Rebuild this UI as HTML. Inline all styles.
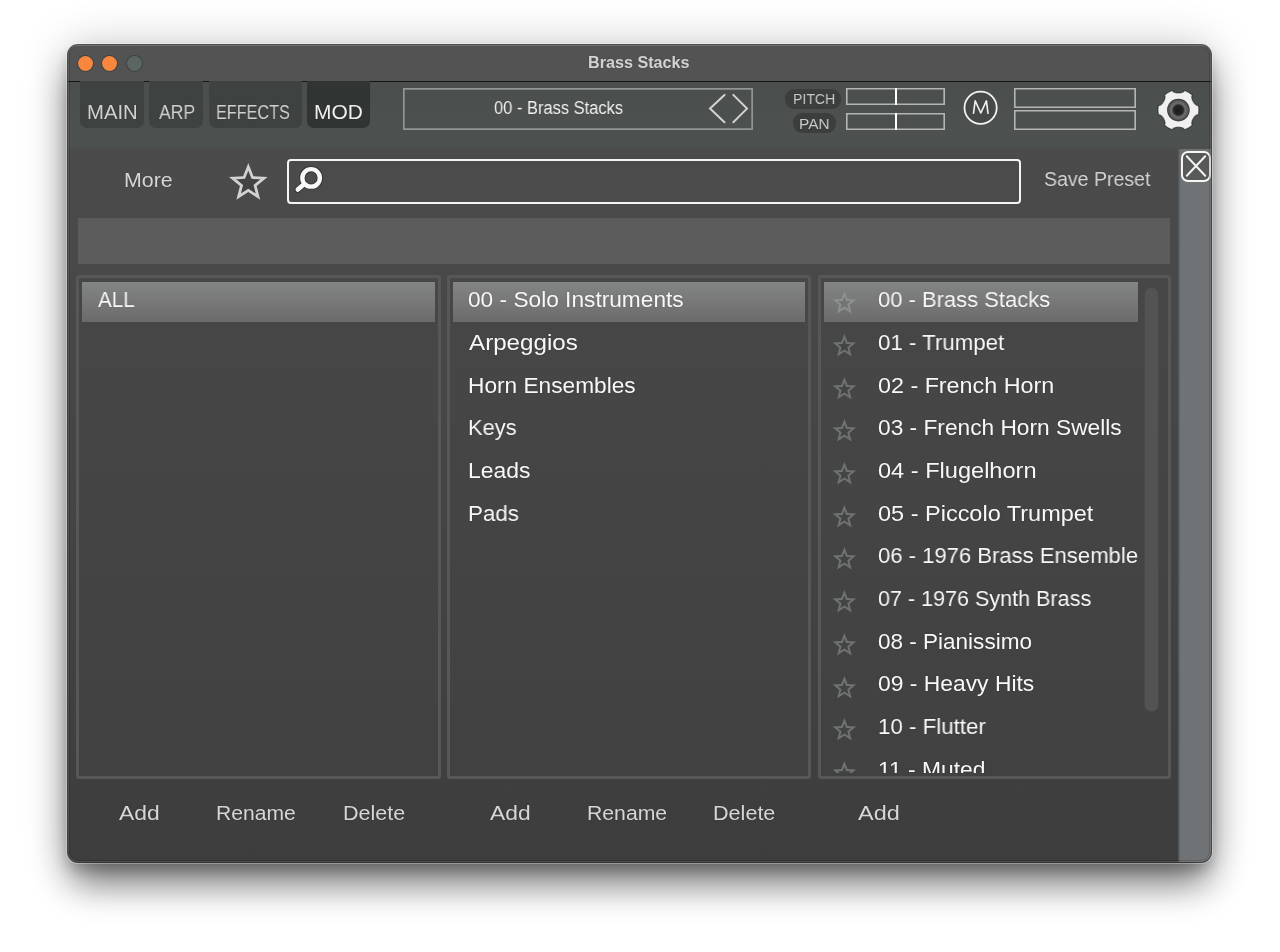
<!DOCTYPE html>
<html><head><meta charset="utf-8">
<style>
*{margin:0;padding:0;box-sizing:border-box}
html,body{width:1280px;height:952px;overflow:hidden;background:#fff;font-family:"Liberation Sans",sans-serif}
.win{position:absolute;left:68px;top:45px;width:1143px;height:817px;border-radius:10px;overflow:hidden;background:#444;
 box-shadow:0 0 0 1px rgba(0,0,0,.65),0 0 0 2px rgba(255,255,255,.3),0 26px 36px -4px rgba(0,0,0,.48),0 8px 14px rgba(0,0,0,.2),0 2px 46px rgba(0,0,0,.24)}
.title{position:absolute;left:0;top:0;width:1144px;height:36.5px;background:#535353;border-bottom:1.5px solid #151515;box-shadow:inset 0 1.5px 0 rgba(255,255,255,.16)}
.dot{position:absolute;top:11px;width:15px;height:15px;border-radius:50%;box-shadow:0 0 0 1px rgba(40,55,65,.55)}
.hdr{position:absolute;left:0;top:36.5px;width:1144px;height:68.5px;background:linear-gradient(#4a4e4c,#4d5250 85%,#4b4e4d)}
.body{position:absolute;left:0;top:105px;width:1144px;height:712px;background:linear-gradient(#4b4b4b,#3d3d3d)}
.strip{position:absolute;left:1110px;top:103.5px;width:33px;height:714px;background:#6f7376;box-shadow:inset 1.5px 0 1px rgba(0,0,0,.25)}
.a{position:absolute}
.tx{position:absolute;white-space:nowrap;line-height:1;transform-origin:0 0;will-change:transform;text-shadow:0 0 1.5px rgba(0,0,0,.22)}
.tab{position:absolute;top:81px;height:47px;background:#3e4240;border-radius:0 0 7px 7px}
.panel{position:absolute;top:275px;height:504px;border:3px solid #575757;border-radius:3px;background:linear-gradient(#474747,#414141)}
.sel{position:absolute;height:40px;background:linear-gradient(#838584,#6b6b6b)}
</style></head><body>
<div class="win">
  <div class="title">
    <div class="dot" style="left:10px;background:#f7863e"></div>
    <div class="dot" style="left:34px;background:#f7863e"></div>
    <div class="dot" style="left:59px;background:#5c6660"></div>
  </div>
  <div class="hdr"></div>
  <div class="body"></div>
  <div class="strip"></div>
</div>

<!-- tabs -->
<div class="tab" style="left:80px;width:64px"></div>
<div class="tab" style="left:149px;width:54px"></div>
<div class="tab" style="left:209px;width:93px"></div>
<div class="tab" style="left:307px;width:63px;background:#303433"></div>

<!-- preset display -->
<div class="a" style="left:403px;top:88px;width:350px;height:41.5px;box-shadow:inset 0 0 0 1.7px #919594"></div>
<svg class="a" style="left:700px;top:88px" width="56" height="41" viewBox="700 88 56 41">
 <path d="M724.5 94.9 L710 108.6 L724.5 122.3 M733.3 94.9 L747 108.6 L733.3 122.3" fill="none" stroke="#d2d3d2" stroke-width="2" stroke-linecap="round" stroke-linejoin="miter"/>
</svg>

<!-- pitch / pan -->
<div class="a" style="left:785px;top:89px;width:56px;height:19.5px;border-radius:9px;background:#3b3e3d"></div>
<div class="a" style="left:793px;top:113px;width:43px;height:19.5px;border-radius:9px;background:#3b3e3d"></div>
<div class="a" style="left:846px;top:88px;width:99px;height:17px;box-shadow:inset 0 0 0 1.6px #b3b6b5"></div>
<div class="a" style="left:895px;top:88px;width:2px;height:17px;background:#fff"></div>
<div class="a" style="left:846px;top:112.5px;width:99px;height:17px;box-shadow:inset 0 0 0 1.6px #b3b6b5"></div>
<div class="a" style="left:895px;top:112.5px;width:2px;height:17px;background:#fff"></div>

<!-- M -->
<svg class="a" style="left:958px;top:86px" width="46" height="44" viewBox="958 86 46 44">
 <circle cx="980.6" cy="107.8" r="16.1" fill="#464847" stroke="#f2f2f2" stroke-width="1.8"/>
 <path d="M973.4 113.8 L975.2 100.9 L980.8 113 L986.4 100.9 L988.1 113.8" fill="none" stroke="#f0f0f0" stroke-width="1.6" stroke-linejoin="round"/>
</svg>

<!-- right boxes -->
<div class="a" style="left:1014px;top:88px;width:122px;height:19.5px;box-shadow:inset 0 0 0 1.6px #b3b6b5"></div>
<div class="a" style="left:1014px;top:110px;width:122px;height:19.5px;box-shadow:inset 0 0 0 1.6px #b3b6b5"></div>

<!-- gear -->
<svg class="a" style="left:1152px;top:84px" width="52" height="52" viewBox="1152 84 52 52">
 <defs>
  <radialGradient id="gh" cx="0.5" cy="0.5" r="0.5">
   <stop offset="0" stop-color="#1c1c1c"/><stop offset="0.42" stop-color="#262626"/><stop offset="0.62" stop-color="#707070"/><stop offset="0.85" stop-color="#555"/><stop offset="1" stop-color="#333"/>
  </radialGradient>
 </defs>
 <polygon points="1198.80,110.10 1198.80,110.46 1198.79,110.81 1198.77,111.17 1198.75,111.52 1198.72,111.88 1198.69,112.23 1198.65,112.59 1198.60,112.94 1198.55,113.29 1198.49,113.64 1198.43,113.99 1198.35,114.34 1198.28,114.69 1197.11,114.77 1196.60,114.98 1196.21,115.21 1195.88,115.44 1195.58,115.68 1195.31,115.92 1195.06,116.16 1194.83,116.41 1194.61,116.65 1194.41,116.90 1194.22,117.14 1194.03,117.39 1193.85,117.64 1193.68,117.89 1193.52,118.14 1193.36,118.39 1193.21,118.65 1193.06,118.91 1192.92,119.17 1192.78,119.44 1192.65,119.71 1192.53,119.99 1192.41,120.28 1192.29,120.57 1192.18,120.87 1192.08,121.18 1191.98,121.50 1191.90,121.83 1191.82,122.19 1191.76,122.56 1191.73,122.97 1191.73,123.43 1191.80,123.97 1192.31,125.02 1192.05,125.26 1191.78,125.50 1191.51,125.73 1191.24,125.95 1190.96,126.18 1190.68,126.39 1190.39,126.60 1190.10,126.81 1189.81,127.01 1189.51,127.21 1189.21,127.40 1188.91,127.59 1188.60,127.77 1188.29,127.94 1187.98,128.11 1187.66,128.28 1187.34,128.44 1187.02,128.59 1186.70,128.74 1186.37,128.88 1186.04,129.01 1185.71,129.15 1185.38,129.27 1185.04,129.39 1184.70,129.50 1184.36,129.61 1183.72,128.64 1183.28,128.30 1182.88,128.08 1182.51,127.91 1182.16,127.77 1181.81,127.66 1181.48,127.56 1181.15,127.48 1180.83,127.42 1180.52,127.36 1180.21,127.32 1179.90,127.28 1179.60,127.25 1179.30,127.23 1179.00,127.21 1178.70,127.20 1178.40,127.20 1178.10,127.20 1177.80,127.21 1177.50,127.23 1177.20,127.25 1176.90,127.28 1176.59,127.32 1176.28,127.36 1175.97,127.42 1175.65,127.48 1175.32,127.56 1174.99,127.66 1174.64,127.77 1174.29,127.91 1173.92,128.08 1173.52,128.30 1173.08,128.64 1172.44,129.61 1172.10,129.50 1171.76,129.39 1171.42,129.27 1171.09,129.15 1170.76,129.01 1170.43,128.88 1170.10,128.74 1169.78,128.59 1169.46,128.44 1169.14,128.28 1168.82,128.11 1168.51,127.94 1168.20,127.77 1167.89,127.59 1167.59,127.40 1167.29,127.21 1166.99,127.01 1166.70,126.81 1166.41,126.60 1166.12,126.39 1165.84,126.18 1165.56,125.95 1165.29,125.73 1165.02,125.50 1164.75,125.26 1164.49,125.02 1165.00,123.97 1165.07,123.43 1165.07,122.97 1165.04,122.56 1164.98,122.19 1164.90,121.83 1164.82,121.50 1164.72,121.18 1164.62,120.87 1164.51,120.57 1164.39,120.28 1164.27,119.99 1164.15,119.71 1164.02,119.44 1163.88,119.17 1163.74,118.91 1163.59,118.65 1163.44,118.39 1163.28,118.14 1163.12,117.89 1162.95,117.64 1162.77,117.39 1162.58,117.14 1162.39,116.90 1162.19,116.65 1161.97,116.41 1161.74,116.16 1161.49,115.92 1161.22,115.68 1160.92,115.44 1160.59,115.21 1160.20,114.98 1159.69,114.77 1158.52,114.69 1158.45,114.34 1158.37,113.99 1158.31,113.64 1158.25,113.29 1158.20,112.94 1158.15,112.59 1158.11,112.23 1158.08,111.88 1158.05,111.52 1158.03,111.17 1158.01,110.81 1158.00,110.46 1158.00,110.10 1158.00,109.74 1158.01,109.39 1158.03,109.03 1158.05,108.68 1158.08,108.32 1158.11,107.97 1158.15,107.61 1158.20,107.26 1158.25,106.91 1158.31,106.56 1158.37,106.21 1158.45,105.86 1158.52,105.51 1159.69,105.43 1160.20,105.22 1160.59,104.99 1160.92,104.76 1161.22,104.52 1161.49,104.28 1161.74,104.04 1161.97,103.79 1162.19,103.55 1162.39,103.30 1162.58,103.06 1162.77,102.81 1162.95,102.56 1163.12,102.31 1163.28,102.06 1163.44,101.81 1163.59,101.55 1163.74,101.29 1163.88,101.03 1164.02,100.76 1164.15,100.49 1164.27,100.21 1164.39,99.92 1164.51,99.63 1164.62,99.33 1164.72,99.02 1164.82,98.70 1164.90,98.37 1164.98,98.01 1165.04,97.64 1165.07,97.23 1165.07,96.77 1165.00,96.23 1164.49,95.18 1164.75,94.94 1165.02,94.70 1165.29,94.47 1165.56,94.25 1165.84,94.02 1166.12,93.81 1166.41,93.60 1166.70,93.39 1166.99,93.19 1167.29,92.99 1167.59,92.80 1167.89,92.61 1168.20,92.43 1168.51,92.26 1168.82,92.09 1169.14,91.92 1169.46,91.76 1169.78,91.61 1170.10,91.46 1170.43,91.32 1170.76,91.19 1171.09,91.05 1171.42,90.93 1171.76,90.81 1172.10,90.70 1172.44,90.59 1173.08,91.56 1173.52,91.90 1173.92,92.12 1174.29,92.29 1174.64,92.43 1174.99,92.54 1175.32,92.64 1175.65,92.72 1175.97,92.78 1176.28,92.84 1176.59,92.88 1176.90,92.92 1177.20,92.95 1177.50,92.97 1177.80,92.99 1178.10,93.00 1178.40,93.00 1178.70,93.00 1179.00,92.99 1179.30,92.97 1179.60,92.95 1179.90,92.92 1180.21,92.88 1180.52,92.84 1180.83,92.78 1181.15,92.72 1181.48,92.64 1181.81,92.54 1182.16,92.43 1182.51,92.29 1182.88,92.12 1183.28,91.90 1183.72,91.56 1184.36,90.59 1184.70,90.70 1185.04,90.81 1185.38,90.93 1185.71,91.05 1186.04,91.19 1186.37,91.32 1186.70,91.46 1187.02,91.61 1187.34,91.76 1187.66,91.92 1187.98,92.09 1188.29,92.26 1188.60,92.43 1188.91,92.61 1189.21,92.80 1189.51,92.99 1189.81,93.19 1190.10,93.39 1190.39,93.60 1190.68,93.81 1190.96,94.02 1191.24,94.25 1191.51,94.47 1191.78,94.70 1192.05,94.94 1192.31,95.18 1191.80,96.23 1191.73,96.77 1191.73,97.23 1191.76,97.64 1191.82,98.01 1191.90,98.37 1191.98,98.70 1192.08,99.02 1192.18,99.33 1192.29,99.63 1192.41,99.92 1192.53,100.21 1192.65,100.49 1192.78,100.76 1192.92,101.03 1193.06,101.29 1193.21,101.55 1193.36,101.81 1193.52,102.06 1193.68,102.31 1193.85,102.56 1194.03,102.81 1194.22,103.06 1194.41,103.30 1194.61,103.55 1194.83,103.79 1195.06,104.04 1195.31,104.28 1195.58,104.52 1195.88,104.76 1196.21,104.99 1196.60,105.22 1197.11,105.43 1198.28,105.51 1198.35,105.86 1198.43,106.21 1198.49,106.56 1198.55,106.91 1198.60,107.26 1198.65,107.61 1198.69,107.97 1198.72,108.32 1198.75,108.68 1198.77,109.03 1198.79,109.39 1198.80,109.74" fill="#f0f0f0" stroke="rgba(0,0,0,.45)" stroke-width="1.2"/>
 <circle cx="1178.4" cy="110.1" r="11.3" fill="url(#gh)"/>
</svg>

<!-- search row -->
<div class="a" style="left:287px;top:159px;width:734px;height:44.5px;border:2.5px solid #f4f4f4;border-radius:4px;background:#4b4b4b"></div>
<svg class="a" style="left:290px;top:162px" width="40" height="38" viewBox="290 162 40 38">
 <circle cx="311.1" cy="177.9" r="8.75" fill="none" stroke="rgba(0,0,0,.3)" stroke-width="6.2"/>
 <path d="M304 184.3 L297.8 189.6" stroke="rgba(0,0,0,.3)" stroke-width="6.4" stroke-linecap="round"/>
 <circle cx="311.1" cy="177.9" r="8.75" fill="none" stroke="#f8f8f8" stroke-width="4.4"/>
 <path d="M304 184.3 L297.8 189.6" stroke="#f8f8f8" stroke-width="4.6" stroke-linecap="round"/>
</svg>
<svg class="a" style="left:225.95px;top:160.80px" width="44.60" height="44.60" viewBox="225.95 160.80 44.60 44.60"><defs><clipPath id="sc99"><polygon points="248.25,162.80 253.42,175.98 267.56,176.83 256.62,185.82 260.18,199.52 248.25,191.90 236.32,199.52 239.88,185.82 228.94,176.83 243.08,175.98"/></clipPath></defs><polygon points="248.25,162.80 253.42,175.98 267.56,176.83 256.62,185.82 260.18,199.52 248.25,191.90 236.32,199.52 239.88,185.82 228.94,176.83 243.08,175.98" fill="#434343" stroke="#d2d2d2" stroke-width="5.6" stroke-miterlimit="20" clip-path="url(#sc99)"/></svg>

<!-- close -->
<div class="a" style="left:1180.5px;top:151px;width:30.5px;height:30.5px;border:2.5px solid #f6f6f6;border-radius:7px;background:#575858"></div>
<svg class="a" style="left:1180px;top:150px" width="32" height="32" viewBox="1180 150 32 32">
 <path d="M1186.8 156.3 L1205.2 175.8 M1205.2 156.3 L1186.8 175.8" stroke="#f4f4f4" stroke-width="2" stroke-linecap="round"/>
</svg>

<!-- gray bar -->
<div class="a" style="left:78px;top:217.5px;width:1092px;height:46px;background:#5c5c5c"></div>

<!-- panels -->
<div class="panel" style="left:76px;width:365px"></div>
<div class="panel" style="left:447px;width:364px"></div>
<div class="panel" style="left:818px;width:353px"></div>

<div class="sel" style="left:82px;top:282px;width:352.5px"></div>
<div class="sel" style="left:452.5px;top:282px;width:352.5px"></div>
<div class="sel" style="left:823.5px;top:282px;width:314px"></div>

<!-- scrollbar -->
<div class="a" style="left:1144px;top:286.5px;width:14.5px;height:425px;border-radius:7px;background:#535353;box-shadow:inset 0 0 0 1px rgba(0,0,0,.12)"></div>

<svg class="a" style="left:829.90px;top:289.20px" width="28.80" height="28.80" viewBox="829.90 289.20 28.80 28.80"><defs><clipPath id="sc0"><polygon points="844.30,291.20 847.47,299.23 856.09,299.77 849.44,305.27 851.59,313.63 844.30,309.00 837.01,313.63 839.16,305.27 832.51,299.77 841.13,299.23"/></clipPath></defs><polygon points="844.30,291.20 847.47,299.23 856.09,299.77 849.44,305.27 851.59,313.63 844.30,309.00 837.01,313.63 839.16,305.27 832.51,299.77 841.13,299.23" fill="#727473" stroke="#8e908f" stroke-width="4.0" stroke-miterlimit="20" clip-path="url(#sc0)"/></svg>
<svg class="a" style="left:829.90px;top:331.90px" width="28.80" height="28.80" viewBox="829.90 331.90 28.80 28.80"><defs><clipPath id="sc1"><polygon points="844.30,333.90 847.47,341.93 856.09,342.47 849.44,347.97 851.59,356.33 844.30,351.70 837.01,356.33 839.16,347.97 832.51,342.47 841.13,341.93"/></clipPath></defs><polygon points="844.30,333.90 847.47,341.93 856.09,342.47 849.44,347.97 851.59,356.33 844.30,351.70 837.01,356.33 839.16,347.97 832.51,342.47 841.13,341.93" fill="#434544" stroke="#6e7270" stroke-width="4.0" stroke-miterlimit="20" clip-path="url(#sc1)"/></svg>
<svg class="a" style="left:829.90px;top:374.60px" width="28.80" height="28.80" viewBox="829.90 374.60 28.80 28.80"><defs><clipPath id="sc2"><polygon points="844.30,376.60 847.47,384.63 856.09,385.17 849.44,390.67 851.59,399.03 844.30,394.40 837.01,399.03 839.16,390.67 832.51,385.17 841.13,384.63"/></clipPath></defs><polygon points="844.30,376.60 847.47,384.63 856.09,385.17 849.44,390.67 851.59,399.03 844.30,394.40 837.01,399.03 839.16,390.67 832.51,385.17 841.13,384.63" fill="#434544" stroke="#6e7270" stroke-width="4.0" stroke-miterlimit="20" clip-path="url(#sc2)"/></svg>
<svg class="a" style="left:829.90px;top:417.30px" width="28.80" height="28.80" viewBox="829.90 417.30 28.80 28.80"><defs><clipPath id="sc3"><polygon points="844.30,419.30 847.47,427.33 856.09,427.87 849.44,433.37 851.59,441.73 844.30,437.10 837.01,441.73 839.16,433.37 832.51,427.87 841.13,427.33"/></clipPath></defs><polygon points="844.30,419.30 847.47,427.33 856.09,427.87 849.44,433.37 851.59,441.73 844.30,437.10 837.01,441.73 839.16,433.37 832.51,427.87 841.13,427.33" fill="#434544" stroke="#6e7270" stroke-width="4.0" stroke-miterlimit="20" clip-path="url(#sc3)"/></svg>
<svg class="a" style="left:829.90px;top:460.00px" width="28.80" height="28.80" viewBox="829.90 460.00 28.80 28.80"><defs><clipPath id="sc4"><polygon points="844.30,462.00 847.47,470.03 856.09,470.57 849.44,476.07 851.59,484.43 844.30,479.80 837.01,484.43 839.16,476.07 832.51,470.57 841.13,470.03"/></clipPath></defs><polygon points="844.30,462.00 847.47,470.03 856.09,470.57 849.44,476.07 851.59,484.43 844.30,479.80 837.01,484.43 839.16,476.07 832.51,470.57 841.13,470.03" fill="#434544" stroke="#6e7270" stroke-width="4.0" stroke-miterlimit="20" clip-path="url(#sc4)"/></svg>
<svg class="a" style="left:829.90px;top:502.70px" width="28.80" height="28.80" viewBox="829.90 502.70 28.80 28.80"><defs><clipPath id="sc5"><polygon points="844.30,504.70 847.47,512.73 856.09,513.27 849.44,518.77 851.59,527.13 844.30,522.50 837.01,527.13 839.16,518.77 832.51,513.27 841.13,512.73"/></clipPath></defs><polygon points="844.30,504.70 847.47,512.73 856.09,513.27 849.44,518.77 851.59,527.13 844.30,522.50 837.01,527.13 839.16,518.77 832.51,513.27 841.13,512.73" fill="#434544" stroke="#6e7270" stroke-width="4.0" stroke-miterlimit="20" clip-path="url(#sc5)"/></svg>
<svg class="a" style="left:829.90px;top:545.40px" width="28.80" height="28.80" viewBox="829.90 545.40 28.80 28.80"><defs><clipPath id="sc6"><polygon points="844.30,547.40 847.47,555.43 856.09,555.97 849.44,561.47 851.59,569.83 844.30,565.20 837.01,569.83 839.16,561.47 832.51,555.97 841.13,555.43"/></clipPath></defs><polygon points="844.30,547.40 847.47,555.43 856.09,555.97 849.44,561.47 851.59,569.83 844.30,565.20 837.01,569.83 839.16,561.47 832.51,555.97 841.13,555.43" fill="#434544" stroke="#6e7270" stroke-width="4.0" stroke-miterlimit="20" clip-path="url(#sc6)"/></svg>
<svg class="a" style="left:829.90px;top:588.10px" width="28.80" height="28.80" viewBox="829.90 588.10 28.80 28.80"><defs><clipPath id="sc7"><polygon points="844.30,590.10 847.47,598.13 856.09,598.67 849.44,604.17 851.59,612.53 844.30,607.90 837.01,612.53 839.16,604.17 832.51,598.67 841.13,598.13"/></clipPath></defs><polygon points="844.30,590.10 847.47,598.13 856.09,598.67 849.44,604.17 851.59,612.53 844.30,607.90 837.01,612.53 839.16,604.17 832.51,598.67 841.13,598.13" fill="#434544" stroke="#6e7270" stroke-width="4.0" stroke-miterlimit="20" clip-path="url(#sc7)"/></svg>
<svg class="a" style="left:829.90px;top:630.80px" width="28.80" height="28.80" viewBox="829.90 630.80 28.80 28.80"><defs><clipPath id="sc8"><polygon points="844.30,632.80 847.47,640.83 856.09,641.37 849.44,646.87 851.59,655.23 844.30,650.60 837.01,655.23 839.16,646.87 832.51,641.37 841.13,640.83"/></clipPath></defs><polygon points="844.30,632.80 847.47,640.83 856.09,641.37 849.44,646.87 851.59,655.23 844.30,650.60 837.01,655.23 839.16,646.87 832.51,641.37 841.13,640.83" fill="#434544" stroke="#6e7270" stroke-width="4.0" stroke-miterlimit="20" clip-path="url(#sc8)"/></svg>
<svg class="a" style="left:829.90px;top:673.50px" width="28.80" height="28.80" viewBox="829.90 673.50 28.80 28.80"><defs><clipPath id="sc9"><polygon points="844.30,675.50 847.47,683.53 856.09,684.07 849.44,689.57 851.59,697.93 844.30,693.30 837.01,697.93 839.16,689.57 832.51,684.07 841.13,683.53"/></clipPath></defs><polygon points="844.30,675.50 847.47,683.53 856.09,684.07 849.44,689.57 851.59,697.93 844.30,693.30 837.01,697.93 839.16,689.57 832.51,684.07 841.13,683.53" fill="#434544" stroke="#6e7270" stroke-width="4.0" stroke-miterlimit="20" clip-path="url(#sc9)"/></svg>
<svg class="a" style="left:829.90px;top:716.20px" width="28.80" height="28.80" viewBox="829.90 716.20 28.80 28.80"><defs><clipPath id="sc10"><polygon points="844.30,718.20 847.47,726.23 856.09,726.77 849.44,732.27 851.59,740.63 844.30,736.00 837.01,740.63 839.16,732.27 832.51,726.77 841.13,726.23"/></clipPath></defs><polygon points="844.30,718.20 847.47,726.23 856.09,726.77 849.44,732.27 851.59,740.63 844.30,736.00 837.01,740.63 839.16,732.27 832.51,726.77 841.13,726.23" fill="#434544" stroke="#6e7270" stroke-width="4.0" stroke-miterlimit="20" clip-path="url(#sc10)"/></svg>
<div style="position:absolute;left:820px;top:740px;width:60px;height:33px;overflow:hidden"><div style="position:absolute;left:-820px;top:-740px"><svg class="a" style="left:829.90px;top:758.90px" width="28.80" height="28.80" viewBox="829.90 758.90 28.80 28.80"><defs><clipPath id="sc11"><polygon points="844.30,760.90 847.47,768.93 856.09,769.47 849.44,774.97 851.59,783.33 844.30,778.70 837.01,783.33 839.16,774.97 832.51,769.47 841.13,768.93"/></clipPath></defs><polygon points="844.30,760.90 847.47,768.93 856.09,769.47 849.44,774.97 851.59,783.33 844.30,778.70 837.01,783.33 839.16,774.97 832.51,769.47 841.13,768.93" fill="#434544" stroke="#6e7270" stroke-width="4.0" stroke-miterlimit="20" clip-path="url(#sc11)"/></svg></div></div>

<div class="tx" style="left:587.74px;top:55.21px;font-size:16px;color:#d2d2d2;transform:scaleX(1.0104);font-weight:bold">Brass Stacks</div>
<div class="tx" style="left:86.99px;top:101.57px;font-size:20px;color:#cfd0cf;transform:scaleX(1.0146)">MAIN</div>
<div class="tx" style="left:158.50px;top:101.57px;font-size:20px;color:#cfd0cf;transform:scaleX(0.8803)">ARP</div>
<div class="tx" style="left:216.09px;top:101.57px;font-size:20px;color:#cfd0cf;transform:scaleX(0.8109)">EFFECTS</div>
<div class="tx" style="left:313.95px;top:101.57px;font-size:20px;color:#eeeeee;transform:scaleX(1.0483)">MOD</div>
<div class="tx" style="left:494.00px;top:98.51px;font-size:18px;color:#f2f2f2;transform:scaleX(0.9153)">00 - Brass Stacks</div>
<div class="tx" style="left:792.84px;top:90.78px;font-size:15.5px;color:#c9cac9;transform:scaleX(0.9084)">PITCH</div>
<div class="tx" style="left:798.91px;top:115.78px;font-size:15.5px;color:#c9cac9;transform:scaleX(0.9938)">PAN</div>
<div class="tx" style="left:124.46px;top:169.75px;font-size:20.5px;color:#d6d6d6;transform:scaleX(1.0418)">More</div>
<div class="tx" style="left:1044.10px;top:169.05px;font-size:20.5px;color:#d4d4d4;transform:scaleX(0.9529)">Save Preset</div>
<div class="tx" style="left:97.50px;top:289.15px;font-size:22.5px;color:#f8f8f8;transform:scaleX(0.9172)">ALL</div>
<div class="tx" style="left:468.00px;top:289.15px;font-size:22.5px;color:#f8f8f8;transform:scaleX(1.0084)">00 - Solo Instruments</div>
<div class="tx" style="left:468.90px;top:331.85px;font-size:22.5px;color:#f8f8f8;transform:scaleX(1.0745)">Arpeggios</div>
<div class="tx" style="left:467.89px;top:374.55px;font-size:22.5px;color:#f8f8f8;transform:scaleX(1.0080)">Horn Ensembles</div>
<div class="tx" style="left:467.93px;top:417.25px;font-size:22.5px;color:#f8f8f8;transform:scaleX(0.9719)">Keys</div>
<div class="tx" style="left:467.88px;top:459.95px;font-size:22.5px;color:#f8f8f8;transform:scaleX(1.0191)">Leads</div>
<div class="tx" style="left:467.91px;top:502.65px;font-size:22.5px;color:#f8f8f8;transform:scaleX(0.9933)">Pads</div>
<div class="tx" style="left:878.00px;top:289.15px;font-size:22.5px;color:#f8f8f8;transform:scaleX(0.9769)">00 - Brass Stacks</div>
<div class="tx" style="left:878.00px;top:331.85px;font-size:22.5px;color:#f8f8f8;transform:scaleX(0.9898)">01 - Trumpet</div>
<div class="tx" style="left:878.00px;top:374.55px;font-size:22.5px;color:#f8f8f8;transform:scaleX(1.0357)">02 - French Horn</div>
<div class="tx" style="left:878.00px;top:417.25px;font-size:22.5px;color:#f8f8f8;transform:scaleX(1.0096)">03 - French Horn Swells</div>
<div class="tx" style="left:878.00px;top:459.95px;font-size:22.5px;color:#f8f8f8;transform:scaleX(1.0476)">04 - Flugelhorn</div>
<div class="tx" style="left:878.00px;top:502.65px;font-size:22.5px;color:#f8f8f8;transform:scaleX(1.0439)">05 - Piccolo Trumpet</div>
<div class="tx" style="left:878.00px;top:545.35px;font-size:22.5px;color:#f8f8f8;transform:scaleX(0.9806)">06 - 1976 Brass Ensemble</div>
<div class="tx" style="left:878.00px;top:588.05px;font-size:22.5px;color:#f8f8f8;transform:scaleX(0.9578)">07 - 1976 Synth Brass</div>
<div class="tx" style="left:878.00px;top:630.75px;font-size:22.5px;color:#f8f8f8;transform:scaleX(1.0007)">08 - Pianissimo</div>
<div class="tx" style="left:878.00px;top:673.45px;font-size:22.5px;color:#f8f8f8;transform:scaleX(1.0160)">09 - Heavy Hits</div>
<div class="tx" style="left:878.01px;top:716.15px;font-size:22.5px;color:#f8f8f8;transform:scaleX(0.9917)">10 - Flutter</div>
<div style="position:absolute;left:820px;top:740px;width:330px;height:33px;overflow:hidden"><div class="tx" style="left:57.98px;top:18.85px;font-size:22.5px;color:#f8f8f8;transform:scaleX(1.0156)">11 - Muted</div></div>
<div class="tx" style="left:119.25px;top:803.40px;font-size:20.5px;color:#d6d6d6;transform:scaleX(1.1157)">Add</div>
<div class="tx" style="left:216.47px;top:803.40px;font-size:20.5px;color:#d6d6d6;transform:scaleX(1.0285)">Rename</div>
<div class="tx" style="left:342.70px;top:803.40px;font-size:20.5px;color:#d6d6d6;transform:scaleX(1.0500)">Delete</div>
<div class="tx" style="left:490.00px;top:803.40px;font-size:20.5px;color:#d6d6d6;transform:scaleX(1.1144)">Add</div>
<div class="tx" style="left:586.87px;top:803.40px;font-size:20.5px;color:#d6d6d6;transform:scaleX(1.0344)">Rename</div>
<div class="tx" style="left:713.35px;top:803.40px;font-size:20.5px;color:#d6d6d6;transform:scaleX(1.0526)">Delete</div>
<div class="tx" style="left:858.40px;top:803.40px;font-size:20.5px;color:#d6d6d6;transform:scaleX(1.1449)">Add</div>
<div class="a" style="left:68px;top:45px;width:1143px;height:817px;border-radius:10px;box-shadow:inset 0 0 0 1px rgba(255,255,255,.13),inset 0 0 0 2px rgba(0,0,0,.15)"></div>
</body></html>
